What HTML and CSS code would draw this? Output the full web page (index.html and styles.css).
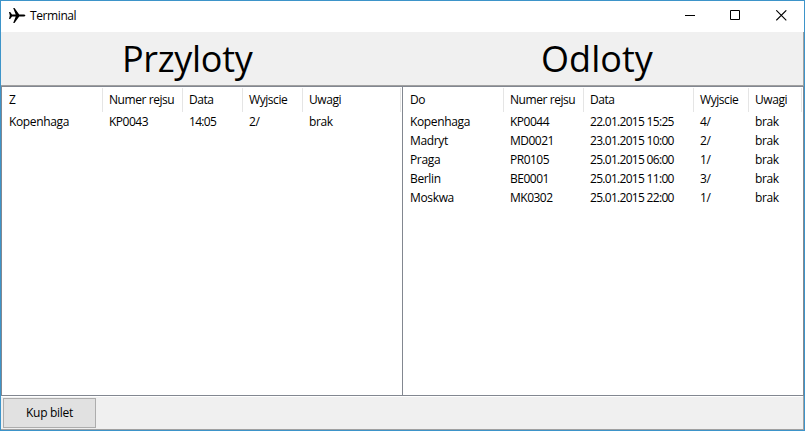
FILE: index.html
```
<!DOCTYPE html>
<html lang="pl">
<head>
<meta charset="utf-8">
<title>Terminal</title>
<link rel="stylesheet" href="styles.css">
</head>
<body>
<div class="window">
  <header class="titlebar">
    <svg class="plane" width="17" height="16" viewBox="0 0 17 16"><path d="M0 4h1.200l1.800 2.500h3.700L4.200 0h1.300l4.700 6.500h4.500q1.600.2 1.700 1-.1.800-1.700 1h-4.500L5.500 15H4.200l2.500-6.500H3l-1.800 2.500H0l.8-3.500z"/></svg>
    <span class="caption">Terminal</span>
    <div class="controls">
      <svg width="11" height="11" viewBox="0 0 11 11"><path d="M1 5.500h10"/></svg>
      <svg width="11" height="11" viewBox="0 0 11 11"><path d="M.5.5h9v9h-9z"/></svg>
      <svg width="11" height="11" viewBox="0 0 11 11"><path class="cross" d="M.3.300l10 10M10.300.300l-10 10"/></svg>
    </div>
  </header>
  <main class="content">
    <div class="headings"><h1><span class="arrivals-title">Przyloty</span></h1><h1><span class="departures-title">Odloty</span></h1></div>
    <div class="lists">
      <section class="list arrivals">
        <div class="row head"><span>Z</span><span>Numer rejsu</span><span>Data</span><span>Wyjscie</span><span>Uwagi</span></div>
        <div class="row"><span>Kopenhaga</span><span class="code">KP0043</span><span class="num">14:05</span><span>2/</span><span>brak</span></div>
      </section>
      <section class="list departures">
        <div class="row head"><span>Do</span><span>Numer rejsu</span><span>Data</span><span>Wyjscie</span><span>Uwagi</span></div>
        <div class="row"><span>Kopenhaga</span><span class="code">KP0044</span><span class="num">22.01.2015 15:25</span><span>4/</span><span>brak</span></div>
        <div class="row"><span>Madryt</span><span class="code">MD0021</span><span class="num">23.01.2015 10:00</span><span>2/</span><span>brak</span></div>
        <div class="row"><span>Praga</span><span class="code">PR0105</span><span class="num">25.01.2015 06:00</span><span>1/</span><span>brak</span></div>
        <div class="row"><span>Berlin</span><span class="code">BE0001</span><span class="num">25.01.2015 11:00</span><span>3/</span><span>brak</span></div>
        <div class="row"><span>Moskwa</span><span class="code">MK0302</span><span class="num">25.01.2015 22:00</span><span>1/</span><span>brak</span></div>
      </section>
    </div>
    <footer class="footer"><button class="buy">Kup bilet</button></footer>
  </main>
</div>
</body>
</html>
```
FILE: styles.css
```
* { box-sizing: border-box; }
body {
  margin: 0;
  font: 12px/19px "Open Sans", "Noto Sans", sans-serif;
  letter-spacing: -0.35px;
  color: #000;
}
.window {
  width: 805px;
  height: 431px;
  border: 1px solid #3d94c9;
  background: #fff;
  display: flex;
  flex-direction: column;
  overflow: hidden;
}
.titlebar {
  height: 31px;
  flex: none;
  display: flex;
  align-items: center;
  padding: 0 17px 2px 8px;
}
.plane { flex: none; }
.caption { margin-left: 4px; letter-spacing: -0.4px; }
.controls { display: flex; gap: 35px; margin-left: auto; }
.controls svg { display: block; fill: none; stroke: #000; }
.controls .cross { stroke-width: 1.1; }
.content {
  flex: 1;
  display: flex;
  flex-direction: column;
  border-right: 1px solid #a0a0a0;
  border-bottom: 1px solid #a0a0a0;
}
.headings {
  height: 54px;
  flex: none;
  display: grid;
  grid-template-columns: 401px 401px;
  background: #f0f0f0;
  border-bottom: 1px solid #a0a0a0;
}
h1 {
  margin: 0;
  font-size: 36px;
  font-weight: 400;
  line-height: 54px;
  letter-spacing: -0.3px;
}
.arrivals-title { margin-left: 121px; }
.departures-title { margin-left: 139px; letter-spacing: 0.05px; }
.lists {
  height: 310px;
  flex: none;
  display: grid;
  grid-template-columns: 401px 401px;
  margin-right: -1px;
  border-top: 1px solid #828790;
  border-right: 1px solid #828790;
  border-bottom: 1px solid #828790;
}
.list { border-left: 1px solid #828790; padding-top: 1px; }
.row { display: grid; height: 19px; }
.arrivals .row { grid-template-columns: 101px 80px 60px 60px 98px; }
.departures .row { grid-template-columns: 101px 80px 110px 55px 53px; }
.row span { padding-left: 6px; white-space: nowrap; }
.row span:first-child { padding-left: 7px; }
.row .code { letter-spacing: -0.5px; }
.row .num { letter-spacing: -0.7px; }
.head { height: 24px; line-height: 24px; letter-spacing: -0.43px; }
.head span { border-right: 1px solid #e5e5e5; }
.footer {
  flex: 1;
  border-top: 1px solid #fff;
  background: #f0f0f0;
  padding: 1px;
  display: flex;
  align-items: flex-start;
}
.buy {
  width: 93px;
  height: 30px;
  margin-left: 1px;
  padding: 0 0 1px;
  border: 1px solid #adadad;
  background: #e1e1e1;
  font: inherit;
  letter-spacing: -0.3px;
  color: inherit;
}
```
